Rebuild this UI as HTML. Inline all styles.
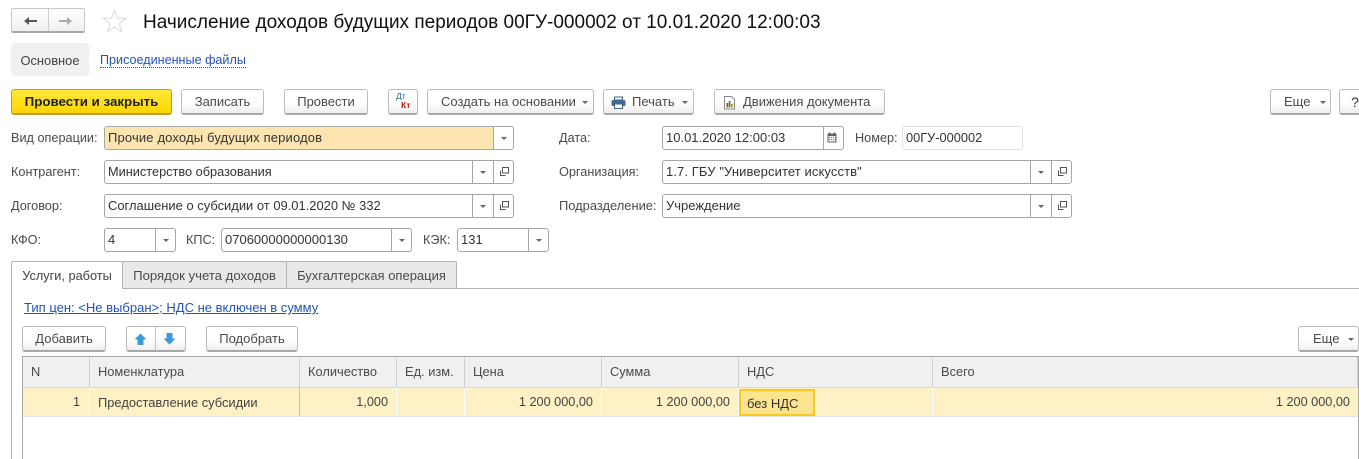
<!DOCTYPE html>
<html lang="ru"><head><meta charset="utf-8"><title>Начисление доходов</title>
<style>
html,body{margin:0;padding:0;background:#fff}
body{width:1359px;height:459px;overflow:hidden;position:relative;font-family:"Liberation Sans",sans-serif;font-size:13px;color:#4a4a4a}
.a,.b,.f,.l,.v,.d,.c,.t{position:absolute;box-sizing:border-box}
.b{height:26px;top:89px;border:1px solid #bcbcbc;border-bottom:2px solid #a8a8a8;border-radius:3px;background:linear-gradient(#fff,#fff 55%,#eeeeee);text-align:center;line-height:24px;white-space:nowrap}
.f{height:24px;border:1px solid #a6a6a6;border-radius:3px;background:#fff}
.l{line-height:16px;white-space:nowrap;font-size:12.7px}
.v{left:3px;top:3px;line-height:16px;color:#333;white-space:nowrap}
.d{top:0;bottom:0;width:1px;background:#a6a6a6}
.tri{position:absolute;width:0;height:0;border-left:3px solid transparent;border-right:3px solid transparent;border-top:3.5px solid #666}
.c{top:357px;height:30px;background:#f0f0f0;line-height:29px;padding-left:8px;white-space:nowrap;font-size:12.85px}
.r{position:absolute;top:388px;height:28px;background:#fdf1c5;line-height:29px;white-space:nowrap;color:#444;box-sizing:border-box;padding:0 7px;font-size:12.7px}
.t{top:261px;height:28px;border:1px solid #b4b4b4;background:#e9e9e9;text-align:center;line-height:27px;border-radius:2px 2px 0 0;white-space:nowrap}
svg{position:absolute;display:block}
</style></head><body>

<!-- nav -->
<div class="a" style="left:11px;top:8px;width:74px;height:25px;border:1px solid #c8c8c8;border-bottom:2px solid #a8a8a8;border-radius:2px;background:linear-gradient(#fff,#f0f0f0)"></div>
<div class="a" style="left:48px;top:9px;width:1px;height:22px;background:#cfcfcf"></div>
<svg style="left:23px;top:15px" width="15" height="12"><path d="M1 6 L6 2 V5 H14 V7 H6 V10 Z" fill="#555"/></svg>
<svg style="left:58px;top:15px" width="15" height="12"><path d="M14 6 L9 2 V5 H1 V7 H9 V10 Z" fill="#aaa"/></svg>
<svg style="left:102px;top:9px" width="25" height="24"><path d="M12.5 1.5 L15.5 9 L23.5 9.5 L17.2 14.6 L19.4 22.5 L12.5 18 L5.6 22.5 L7.8 14.6 L1.5 9.5 L9.5 9 Z" fill="#fff" stroke="#d8d8d8" stroke-width="1"/></svg>
<div class="a" style="left:143px;top:12px;font-size:19px;line-height:22px;color:#111;white-space:nowrap">Начисление доходов будущих периодов 00ГУ-000002 от 10.01.2020 12:00:03</div>

<!-- section tabs -->
<div class="a" style="left:11px;top:43px;width:78px;height:33px;background:#f0f0f0;border-radius:4px;line-height:35px;text-align:center;color:#444;font-size:12.9px">Основное</div>
<div class="a" style="left:100px;top:52px;line-height:16px;font-size:12.6px;color:#1f55b5;border-bottom:1px dotted #1f55b5;height:16px;white-space:nowrap">Присоединенные файлы</div>

<!-- toolbar -->
<div class="b" style="left:11px;width:161px;background:linear-gradient(#ffe93a,#fdd400);border-color:#b8a030;color:#222;font-weight:bold;font-size:13.33px">Провести и закрыть</div>
<div class="b" style="left:181px;width:83px">Записать</div>
<div class="b" style="left:284px;width:84px">Провести</div>
<div class="b" style="left:388px;width:30px"></div>
<div class="a" style="left:396px;top:92px;font-size:8.5px;line-height:9px;color:#2a5f9e">Дт</div>
<div class="a" style="left:401px;top:101px;font-size:8.5px;line-height:9px;color:#c81010;font-weight:bold">Кт</div>
<div class="b" style="left:427px;width:167px;padding-left:13px;text-align:left">Создать на основании<i class="tri" style="left:154px;top:11px"></i></div>
<div class="b" style="left:603px;width:91px;padding-left:28px;text-align:left">Печать<i class="tri" style="left:78px;top:11px"></i></div>
<svg style="left:611px;top:96px" width="15" height="13"><path d="M3.5 1 H11.5 V4 H3.5 Z" fill="#fff" stroke="#3f5f80"/><rect x="0.5" y="4" width="14" height="6" rx="1.5" fill="#3f6a94"/><rect x="3.5" y="8" width="8" height="4.5" fill="#fff" stroke="#3f5f80"/></svg>
<div class="b" style="left:714px;width:171px;padding-left:28px;text-align:left">Движения документа</div>
<svg style="left:723px;top:96px" width="13" height="14"><path d="M1.5 .5 H8.5 L11.5 3.5 V13 H1.5 Z" fill="#fff" stroke="#8a8a8a"/><rect x="3.5" y="7" width="1.8" height="4.5" fill="#d03030"/><rect x="5.7" y="5" width="1.8" height="6.5" fill="#3aa03a"/><rect x="8" y="8" width="1.8" height="3.5" fill="#d08a20"/></svg>
<div class="b" style="left:1270px;width:61px;padding-left:13px;text-align:left">Еще<i class="tri" style="left:49px;top:11px"></i></div>
<div class="b" style="left:1339px;width:32px;color:#333;font-size:14px">?</div>

<!-- row 1 -->
<div class="l" style="left:11px;top:130px">Вид операции:</div>
<div class="f" style="left:104px;top:126px;width:410px;background:#fff"><div class="a" style="left:0;top:0;width:388px;height:22px;background:#fde5b2;border-radius:2px 0 0 2px"></div><div class="v" style="letter-spacing:.15px">Прочие доходы будущих периодов</div><div class="d" style="left:388px"></div><i class="tri" style="left:396px;top:10px"></i></div>
<div class="l" style="left:559px;top:130px">Дата:</div>
<div class="f" style="left:662px;top:126px;width:182px"><div class="v">10.01.2020 12:00:03</div><div class="d" style="left:160px"></div><svg style="left:164px;top:5px" width="11" height="11"><rect x=".5" y="1.5" width="9" height="9" fill="#666"/><rect x="1.5" y="4" width="7" height="5.5" fill="#eee"/><path d="M2.5 .5 V2.5 M7.5 .5 V2.5" stroke="#444"/><path d="M2 5.5 H8.5 M2 7.5 H8.5" stroke="#777" stroke-dasharray="1 1"/></svg></div>
<div class="l" style="left:855px;top:130px">Номер:</div>
<div class="f" style="left:902px;top:126px;width:121px;border-color:#e2e2e2"><div class="v" style="font-size:12.8px">00ГУ-000002</div></div>

<!-- row 2 -->
<div class="l" style="left:11px;top:164px">Контрагент:</div>
<div class="f" style="left:104px;top:160px;width:410px"><div class="v" style="font-size:12.75px">Министерство образования</div><div class="d" style="left:367px"></div><i class="tri" style="left:375px;top:10px"></i><div class="d" style="left:388px"></div><svg style="left:394px;top:5px" width="11" height="11"><rect x="3.5" y="1.5" width="6" height="5.5" fill="#fff" stroke="#555"/><path d="M1.5 4.5 V9.5 H6.5" fill="none" stroke="#555"/></svg></div>
<div class="l" style="left:559px;top:164px">Организация:</div>
<div class="f" style="left:662px;top:160px;width:410px"><div class="v" style="letter-spacing:.1px">1.7. ГБУ "Университет искусств"</div><div class="d" style="left:367px"></div><i class="tri" style="left:375px;top:10px"></i><div class="d" style="left:388px"></div><svg style="left:394px;top:5px" width="11" height="11"><rect x="3.5" y="1.5" width="6" height="5.5" fill="#fff" stroke="#555"/><path d="M1.5 4.5 V9.5 H6.5" fill="none" stroke="#555"/></svg></div>

<!-- row 3 -->
<div class="l" style="left:11px;top:198px">Договор:</div>
<div class="f" style="left:104px;top:194px;width:410px"><div class="v" style="font-size:12.95px">Соглашение о субсидии от 09.01.2020 № 332</div><div class="d" style="left:367px"></div><i class="tri" style="left:375px;top:10px"></i><div class="d" style="left:388px"></div><svg style="left:394px;top:5px" width="11" height="11"><rect x="3.5" y="1.5" width="6" height="5.5" fill="#fff" stroke="#555"/><path d="M1.5 4.5 V9.5 H6.5" fill="none" stroke="#555"/></svg></div>
<div class="l" style="left:559px;top:198px;font-size:12.9px">Подразделение:</div>
<div class="f" style="left:662px;top:194px;width:410px"><div class="v">Учреждение</div><div class="d" style="left:367px"></div><i class="tri" style="left:375px;top:10px"></i><div class="d" style="left:388px"></div><svg style="left:394px;top:5px" width="11" height="11"><rect x="3.5" y="1.5" width="6" height="5.5" fill="#fff" stroke="#555"/><path d="M1.5 4.5 V9.5 H6.5" fill="none" stroke="#555"/></svg></div>

<!-- row 4 -->
<div class="l" style="left:11px;top:232px">КФО:</div>
<div class="f" style="left:104px;top:228px;width:72px"><div class="v">4</div><div class="d" style="left:50px"></div><i class="tri" style="left:58px;top:10px"></i></div>
<div class="l" style="left:186px;top:232px">КПС:</div>
<div class="f" style="left:221px;top:228px;width:191px"><div class="v">07060000000000130</div><div class="d" style="left:169px"></div><i class="tri" style="left:177px;top:10px"></i></div>
<div class="l" style="left:423px;top:232px">КЭК:</div>
<div class="f" style="left:457px;top:228px;width:92px"><div class="v">131</div><div class="d" style="left:70px"></div><i class="tri" style="left:78px;top:10px"></i></div>

<!-- tabs -->
<div class="a" style="left:123px;top:288px;width:1236px;height:1px;background:#b4b4b4"></div>
<div class="a" style="left:11px;top:288px;width:1px;height:171px;background:#b4b4b4"></div>
<div class="t" style="left:11px;width:112px;background:#fff;border-bottom:0;z-index:2;color:#444;font-size:12.75px">Услуги, работы</div>
<div class="t" style="left:122px;width:165px;font-size:13.15px">Порядок учета доходов</div>
<div class="t" style="left:286px;width:171px">Бухгалтерская операция</div>

<div class="a" style="left:24px;top:300px;line-height:16px;color:#1f55b5;text-decoration:underline;white-space:nowrap;font-size:13.03px">Тип цен: &lt;Не выбран&gt;; НДС не включен в сумму</div>

<!-- table toolbar -->
<div class="b" style="left:22px;top:326px;width:84px">Добавить</div>
<div class="b" style="left:126px;top:326px;width:60px"></div>
<div class="a" style="left:155px;top:327px;width:1px;height:23px;background:#c4c4c4"></div>
<svg style="left:134px;top:333px" width="13" height="13"><path d="M6.5 .5 L12.5 6.5 H9.5 V12 H3.5 V6.5 H.5 Z" fill="#3d9ad8"/></svg>
<svg style="left:163px;top:332px" width="13" height="13"><path d="M6.5 12.5 L12.5 6.5 H9.5 V1 H3.5 V6.5 H.5 Z" fill="#3d9ad8"/></svg>
<div class="b" style="left:206px;top:326px;width:92px">Подобрать</div>
<div class="b" style="left:1298px;top:326px;width:61px;padding-left:14px;text-align:left">Еще<i class="tri" style="left:49px;top:11px"></i></div>

<!-- table -->
<div class="a" style="left:22px;top:356px;width:1337px;height:103px;border:1px solid #a8a8a8;border-bottom:0"></div>
<div class="a" style="left:23px;top:357px;width:1335px;height:31px;background:#cfcfcf"></div>
<div class="a" style="left:23px;top:387px;width:1335px;height:1px;background:#d8d8d8"></div>
<div class="c" style="left:23px;width:66px">N</div>
<div class="c" style="left:90px;width:209px">Номенклатура</div>
<div class="c" style="left:300px;width:96px">Количество</div>
<div class="c" style="left:397px;width:67px">Ед. изм.</div>
<div class="c" style="left:465px;width:136px">Цена</div>
<div class="c" style="left:602px;width:136px">Сумма</div>
<div class="c" style="left:739px;width:193px">НДС</div>
<div class="c" style="left:933px;width:424px">Всего</div>

<div class="a" style="left:23px;top:416px;width:1335px;height:1px;background:#e4e4e4"></div>
<div class="r" style="left:23px;width:66px;text-align:right;padding-right:9px">1</div>
<div class="r" style="left:90px;width:209px;padding-left:8px;font-size:12.9px">Предоставление субсидии</div>
<div class="a" style="left:299px;top:388px;width:1px;height:29px;background:#c4c4c4"></div>
<div class="r" style="left:300px;width:96px;text-align:right;padding-right:8px">1,000</div>
<div class="r" style="left:397px;width:67px"></div>
<div class="r" style="left:465px;width:136px;text-align:right;padding-right:8px">1 200 000,00</div>
<div class="r" style="left:602px;width:136px;text-align:right;padding-right:8px">1 200 000,00</div>
<div class="r" style="left:739px;width:193px"></div>
<div class="r" style="left:739px;top:389px;height:27px;width:76px;background:#fde48e;border:2px solid #fbc81c;line-height:25px;padding-left:6px;color:#333;font-size:13px">без НДС</div>
<div class="r" style="left:933px;width:425px;text-align:right;padding-right:8px">1 200 000,00</div>
</body></html>
